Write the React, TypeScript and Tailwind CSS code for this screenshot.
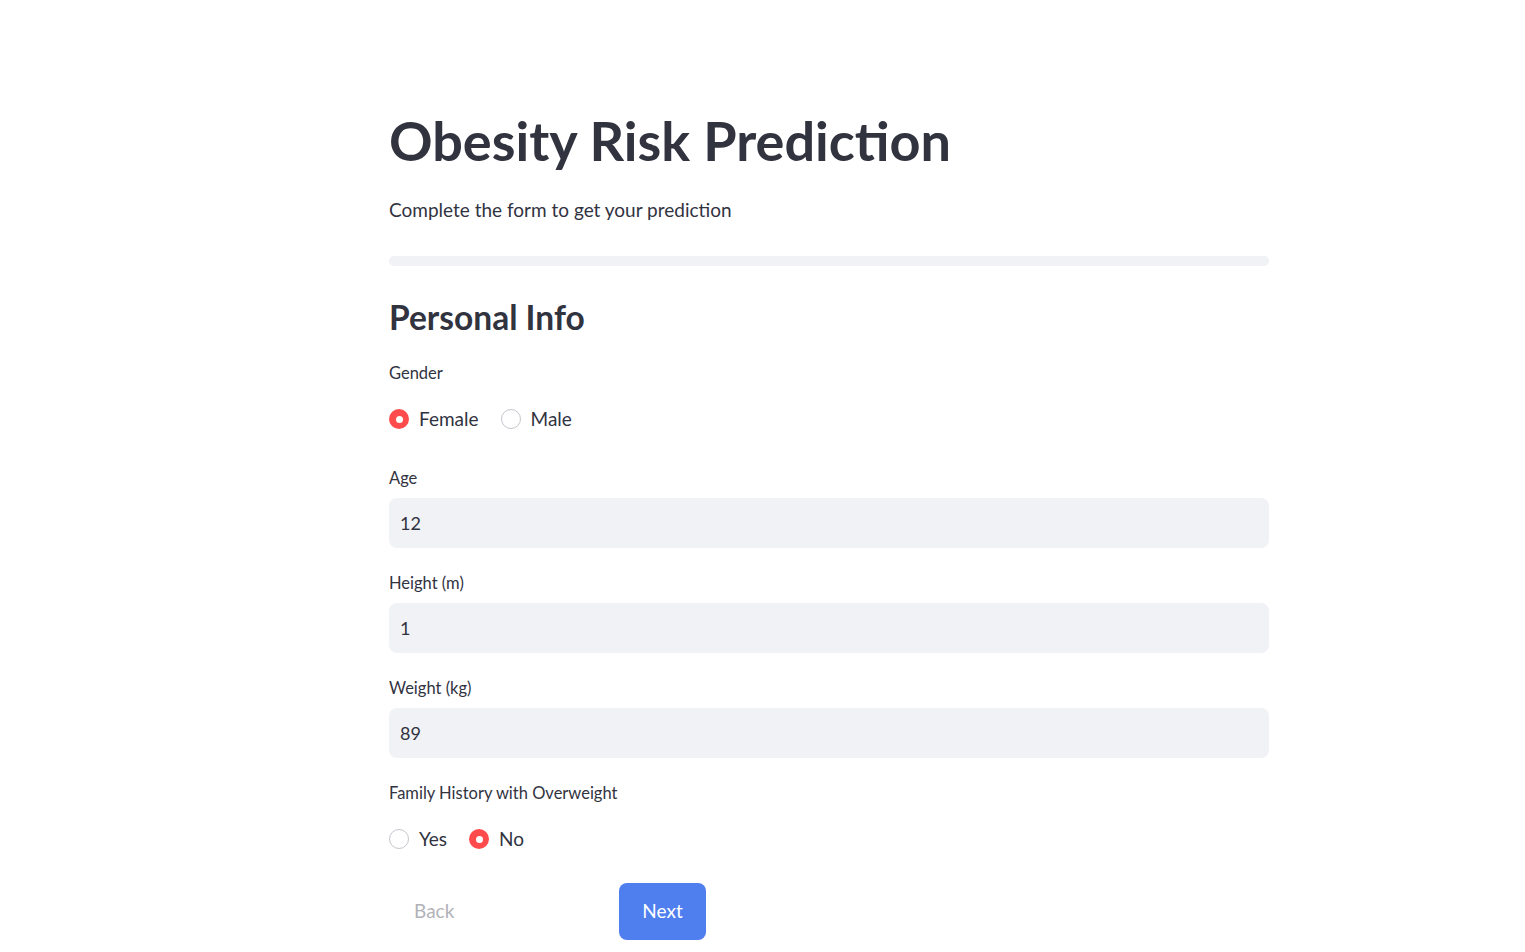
import { useState } from "react"

const font = { fontFamily: "Lato, 'Noto Sans', sans-serif" }

function Radio({ checked, label, onClick }: { checked: boolean; label: string; onClick: () => void }) {
  return (
    <button type="button" onClick={onClick} className="flex items-center gap-[10px] h-[20px]">
      {checked ? (
        <span className="w-[20px] h-[20px] rounded-full bg-[#ff4b4b] flex items-center justify-center">
          <span className="w-[7px] h-[7px] rounded-full bg-white" />
        </span>
      ) : (
        <span className="w-[20px] h-[20px] rounded-full border border-[#c4c6cc] bg-white" />
      )}
      <span className="text-[19px] leading-[20px] text-[#31333f]">{label}</span>
    </button>
  )
}

function Field({ label, value }: { label: string; value: string }) {
  return (
    <div className="flex flex-col">
      <label className="h-[20px] leading-[20px] text-[16.5px] text-[#31333f] mb-[10px]">{label}</label>
      <input
        defaultValue={value}
        className="h-[50px] rounded-[8px] bg-[#f0f2f6] px-[11px] text-[18px] text-[#31333f] outline-none"
        style={font}
      />
    </div>
  )
}

export default function App() {
  const [gender, setGender] = useState("Female")
  const [family, setFamily] = useState("No")

  return (
    <div className="min-h-[952px] bg-white" style={font}>
      <div className="ml-[389px] w-[880px] pt-[106px] flex flex-col">
        <h1 className="h-[70px] leading-[70px] text-[54px] font-bold text-[#31333f]">
          Obesity Risk Prediction
        </h1>
        <p className="mt-[22px] h-[24px] leading-[24px] text-[19px] text-[#31333f]">
          Complete the form to get your prediction
        </p>
        <div className="mt-[34px] h-[10px] rounded-full bg-[#f0f2f6]" />
        <h2 className="mt-[27px] h-[48px] leading-[48px] text-[33.5px] font-bold text-[#31333f]">Personal Info</h2>

        <div className="mt-[22px] h-[20px] leading-[20px] text-[16.5px] text-[#31333f]">Gender</div>
        <div className="mt-[26px] flex gap-[22px]">
          <Radio checked={gender === "Female"} label="Female" onClick={() => setGender("Female")} />
          <Radio checked={gender === "Male"} label="Male" onClick={() => setGender("Male")} />
        </div>

        <div className="mt-[39px] flex flex-col gap-[25px]">
          <Field label="Age" value="12" />
          <Field label="Height (m)" value="1" />
          <Field label="Weight (kg)" value="89" />
        </div>

        <div className="mt-[25px] h-[20px] leading-[20px] text-[16.5px] text-[#31333f]">Family History with Overweight</div>
        <div className="mt-[26px] flex gap-[22px]">
          <Radio checked={family === "Yes"} label="Yes" onClick={() => setFamily("Yes")} />
          <Radio checked={family === "No"} label="No" onClick={() => setFamily("No")} />
        </div>

        <div className="mt-[34px] flex">
          <div className="w-[230px]">
            <button
              type="button"
              disabled
              className="h-[57px] px-[25px] rounded-[8px] text-[19px] text-[#b2b3b8] cursor-not-allowed"
            >
              Back
            </button>
          </div>
          <button
            type="button"
            className="h-[57px] w-[87px] rounded-[8px] bg-[#4f7fee] text-[19px] text-white"
          >
            Next
          </button>
        </div>
      </div>
    </div>
  )
}
